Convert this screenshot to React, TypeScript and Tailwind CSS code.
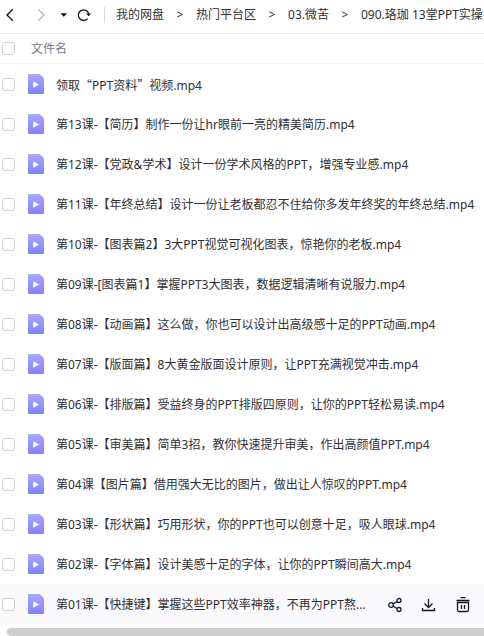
import { useState } from "react"

const path = ["我的网盘", "热门平台区", "03.微苦", "090.珞珈 13堂PPT实操"]

const files = [
  "领取“PPT资料”视频.mp4",
  "第13课-【简历】制作一份让hr眼前一亮的精美简历.mp4",
  "第12课-【党政&学术】设计一份学术风格的PPT，增强专业感.mp4",
  "第11课-【年终总结】设计一份让老板都忍不住给你多发年终奖的年终总结.mp4",
  "第10课-【图表篇2】3大PPT视觉可视化图表，惊艳你的老板.mp4",
  "第09课-[图表篇1】掌握PPT3大图表，数据逻辑清晰有说服力.mp4",
  "第08课-【动画篇】这么做，你也可以设计出高级感十足的PPT动画.mp4",
  "第07课-【版面篇】8大黄金版面设计原则，让PPT充满视觉冲击.mp4",
  "第06课-【排版篇】受益终身的PPT排版四原则，让你的PPT轻松易读.mp4",
  "第05课-【审美篇】简单3招，教你快速提升审美，作出高颜值PPT.mp4",
  "第04课【图片篇】借用强大无比的图片，做出让人惊叹的PPT.mp4",
  "第03课-【形状篇】巧用形状，你的PPT也可以创意十足，吸人眼球.mp4",
  "第02课-【字体篇】设计美感十足的字体，让你的PPT瞬间高大.mp4",
  "第01课-【快捷键】掌握这些PPT效率神器，不再为PPT熬...",
]

const Checkbox = ({ label, checked, onChange }: { label: string; checked: boolean; onChange: () => void }) => (
  <input
    type="checkbox"
    aria-label={label}
    checked={checked}
    onChange={onChange}
    className="block size-[13px] appearance-none rounded-[3px] border border-[#d0d0d3] bg-white checked:border-[#8583ff] checked:bg-[#8583ff]"
  />
)

const VideoIcon = () => (
  <svg width="16" height="20" viewBox="0 0 16 20" className="shrink-0" aria-hidden="true">
    <defs>
      <linearGradient id="video" x1="0" y1="0" x2="0" y2="1">
        <stop offset="0" stopColor="#a9a8ff" />
        <stop offset="1" stopColor="#8280ff" />
      </linearGradient>
    </defs>
    <path
      d="M1.2 0H10.500Q12 0 13 1L15 3.200Q16 4.300 16 5.800V18.800A1.200 1.200 0 0 1 14.800 20H1.200A1.200 1.200 0 0 1 0 18.800V1.200A1.200 1.200 0 0 1 1.200 0z"
      fill="url(#video)"
    />
    <path d="M5.3 7.700v5.600q0 .4.4.2l4.900-2.700q.4-.3 0-.6l-4.900-2.700q-.4-.2-.4.2z" fill="#fff" />
  </svg>
)

// Curly quotes take the full-width form used in Chinese text
const FileName = ({ name }: { name: string }) => (
  <span className="min-w-0 flex-1 truncate">
    {name.split(/([“”])/).map((part, i) =>
      part === "“" || part === "”" ? (
        <span key={i} className="font-['Noto_Sans_CJK_SC',sans-serif]">{part}</span>
      ) : (
        part
      )
    )}
  </span>
)

const RowActions = () => (
  <div className="flex shrink-0 items-center gap-[18px] pr-[13px] pl-4 text-[#14171f]">
    <button type="button" aria-label="分享">
      <svg width="16" height="16" viewBox="0 0 16 16" fill="none" stroke="#101c38" strokeWidth="1.3">
        <circle cx="4" cy="8" r="2.3" />
        <circle cx="12" cy="3.5" r="2" />
        <circle cx="12" cy="12.5" r="2" />
        <path d="M6.1 6.9l4.100-2.300M6.100 9.200l4.100 2.300" />
      </svg>
    </button>
    <button type="button" aria-label="下载">
      <svg width="16" height="16" viewBox="0 0 16 16" fill="none" stroke="currentColor" strokeWidth="1.3">
        <path d="M7.500 2v8.500M3.500 6.500l4 4 4-4M1.500 11v2.500h12V11" />
      </svg>
    </button>
    <button type="button" aria-label="删除">
      <svg width="16" height="16" viewBox="0 0 16 16" fill="none" stroke="currentColor" strokeWidth="1.3">
        <path d="M5.500.7h5M1.500 3.500h13M2.500 5.500v7.500a1.500 1.500 0 0 0 1.500 1.500h8a1.500 1.500 0 0 0 1.500-1.500V5.500zM6.500 8v4M9.500 8v4" />
      </svg>
    </button>
  </div>
)

const Toolbar = () => (
  <header className="flex h-[34px] items-center overflow-hidden border-b border-[#ececee] pb-1 whitespace-nowrap">
    <div className="flex shrink-0 items-center pl-1">
      <button type="button" aria-label="后退" className="mr-[19px]">
        <svg width="12" height="14" viewBox="0 0 12 14" fill="none" stroke="#111" strokeWidth="1.3">
          <path d="M8.800 1.200L3 7l5.800 5.800" />
        </svg>
      </button>
      <button type="button" aria-label="前进" className="mr-3">
        <svg width="12" height="14" viewBox="0 0 12 14" fill="none" stroke="#b8b8b8" strokeWidth="1.3">
          <path d="M3.200 1.200L9 7l-5.800 5.800" />
        </svg>
      </button>
      <button type="button" aria-label="历史记录" className="mr-2">
        <svg width="10" height="14" viewBox="0 0 10 14">
          <path d="M1.500 5.200h6.500L4.800 8.800z" fill="#111" />
        </svg>
      </button>
      <button type="button" aria-label="刷新">
        <svg width="14" height="14" viewBox="0 0 14 14" fill="none" stroke="#111" strokeWidth="1.3">
          <path d="M10.700 10.600A5.300 5.300 0 1 1 11.800 6" />
          <path d="M9.200 5.500h4.800L11.600 8.300z" fill="#111" stroke="none" />
        </svg>
      </button>
    </div>
    <nav aria-label="路径" className="ml-[13px] flex items-center border-l border-[#dcdcde] pl-[11px]">
      {path.map((item, i) => (
        <span key={item} className="flex items-center">
          {i > 0 && <span className="w-8 text-center">&gt;</span>}
          <a href="#">{item}</a>
        </span>
      ))}
    </nav>
  </header>
)

export default function App() {
  const [selected, setSelected] = useState<string[]>([])

  const toggle = (name: string) =>
    setSelected((prev) => (prev.includes(name) ? prev.filter((n) => n !== name) : [...prev, name]))

  const allSelected = selected.length === files.length

  return (
    <main
      lang="zh-CN"
      className="w-full overflow-hidden bg-white font-['Noto_Sans','Noto_Sans_CJK_SC',sans-serif] text-xs text-[#303034]"
    >
      <Toolbar />
      <table className="w-full table-fixed border-separate border-spacing-0 text-left">
        <thead>
          <tr className="h-[30px]">
            <th className="w-7 border-b border-[#f1f1f3] pl-0.5">
              <Checkbox label="全选" checked={allSelected} onChange={() => setSelected(allSelected ? [] : files)} />
            </th>
            <th className="border-b border-[#f1f1f3] pl-[3px] font-normal text-[#747a86]">文件名</th>
          </tr>
        </thead>
        <tbody>
          {files.map((name, i) => (
            <tr key={name} className={i === files.length - 1 ? "h-10 bg-[#fafafc]" : "h-10 hover:bg-[#fafafc]"}>
              <td className="pl-0.5">
                <Checkbox label={name} checked={selected.includes(name)} onChange={() => toggle(name)} />
              </td>
              <td>
                <div className="flex items-center">
                  <VideoIcon />
                  <div className="flex min-w-0 flex-1 items-center pt-0.5 pl-3">
                    <FileName name={name} />
                    {i === files.length - 1 && <RowActions />}
                  </div>
                </div>
              </td>
            </tr>
          ))}
        </tbody>
      </table>
      <div className="mt-1 ml-[7px] h-2 rounded-l-full bg-[#cdced0]" />
    </main>
  )
}
